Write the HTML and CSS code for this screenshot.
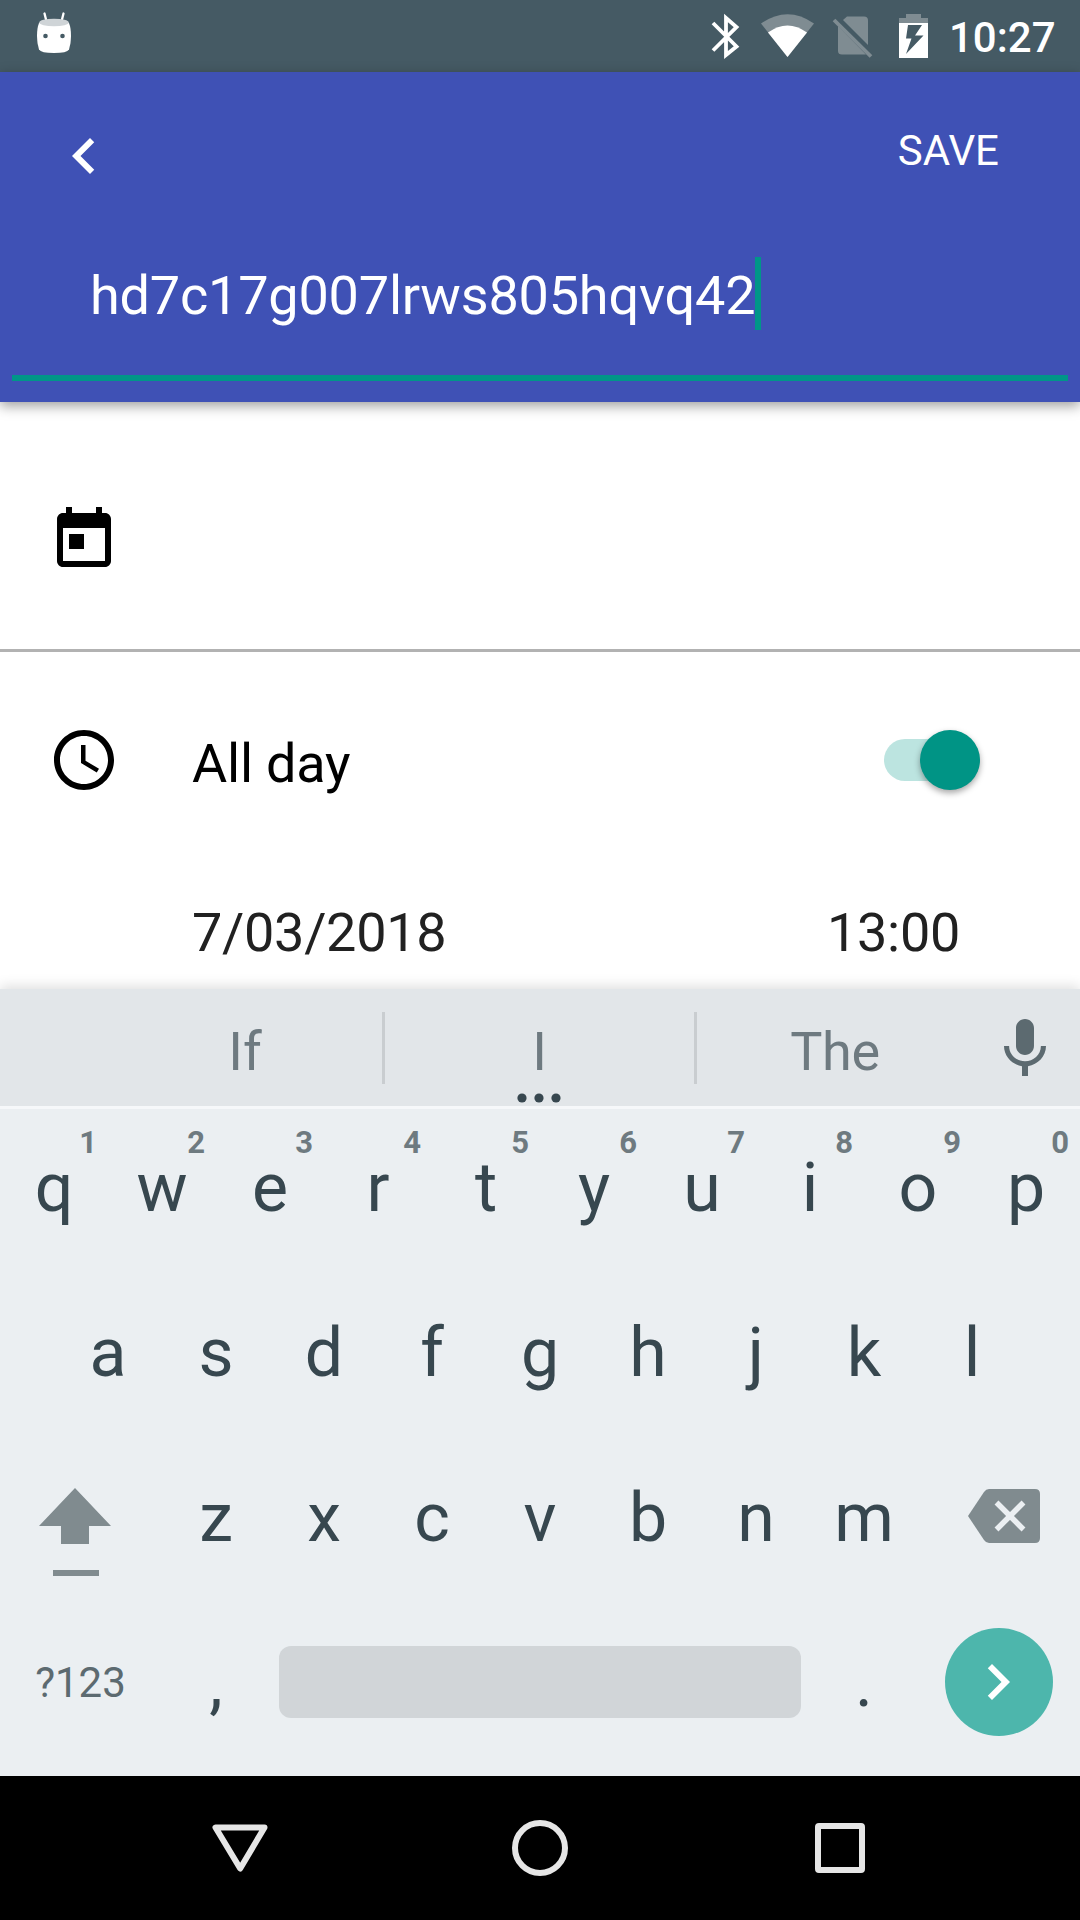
FILE: index.html
```html
<!DOCTYPE html>
<html lang="en">
<head>
<meta charset="utf-8">
<title>Edit event</title>
<link rel="stylesheet" href="styles.css">
</head>
<body>
<div class="screen">
  <div class="status">
    <svg class="status-left" width="360" height="72" viewBox="0 0 360 72">
      <path d="M44.500 13.500l2 8M63.500 13.500l-2 8" stroke="#fff" stroke-width="2.300" stroke-linecap="round"/>
      <path d="M39 23Q54 17 69 23Q71 28 71 36Q71 44 69 49.500Q67 53 54 53Q41 53 39 49.500Q37 44 37 36Q37 28 39 23Z" fill="#fff"/>
      <ellipse cx="54" cy="22.500" rx="14.800" ry="3.800" fill="#cfd4d7"/>
      <circle cx="45.500" cy="36" r="2.300" fill="#455a64"/><circle cx="62.500" cy="36" r="2.300" fill="#455a64"/>
    </svg>
    <svg class="status-icons" width="250" height="72" viewBox="700 0 250 72">
      <path d="M713 23L736.500 46.500L726 55V18L736.500 27L713 50.500" fill="none" stroke="#fff" stroke-width="3.800"/>
      <path d="M761 23.500Q787.500 5 814 23.500L787.500 57Z" fill="#7f8c92"/>
      <path d="M768 32.500Q787.500 18.500 807 32.500L787.500 57Z" fill="#fff"/>
      <path d="M843 20L847 16.500H864Q868 16.500 868 20.500V45Z" fill="#7f8c92"/>
      <path d="M838 26L866 54.500H842Q838 54.500 838 51Z" fill="#7f8c92"/>
      <path d="M834 20L871 56.500" stroke="#7f8c92" stroke-width="3.800"/>
      <path d="M899 23V18H906V14H921V18H928V23Z" fill="#7f8c92"/>
      <path d="M899 23H928V58H899Z" fill="#fff"/>
      <path d="M908 25H922L915 35.500H923.500L906 54L911.500 38.500H906Z" fill="#455a64"/>
    </svg>
    <span class="time">10:27</span>
  </div>

  <header class="header">
    <div class="toolbar">
      <svg width="72" height="72" viewBox="0 0 24 24"><path fill="#fff" d="M15.410 7.410 14 6l-6 6 6 6 1.410-1.410L10.830 12z"/></svg>
      <span class="save">SAVE</span>
    </div>
    <div class="title-field"><span class="title">hd7c17g007lrws805hqvq42</span><i class="caret"></i></div>
  </header>

  <main class="form">
    <div class="row calendar-row">
      <svg width="72" height="72" viewBox="0 0 24 24"><path d="M19 3h-1V1h-2v2H8V1H6v2H5c-1.110 0-1.990.9-1.990 2L3 19c0 1.100.890 2 2 2h14c1.100 0 2-.9 2-2V5c0-1.100-.9-2-2-2zm0 16H5V8h14v11zM7 10h5v5H7z"/></svg>
    </div>
    <div class="row allday-row">
      <svg width="72" height="72" viewBox="0 0 24 24"><path d="M11.990 2C6.470 2 2 6.480 2 12s4.470 10 9.990 10C17.520 22 22 17.520 22 12S17.520 2 11.990 2zM12 20c-4.420 0-8-3.580-8-8s3.580-8 8-8 8 3.580 8 8-3.580 8-8 8zm.5-13H11v6l5.250 3.150.750-1.230-4.500-2.670z"/></svg>
      <span class="label">All day</span>
      <span class="switch"><i class="thumb"></i></span>
    </div>
    <div class="date-row"><span>7/03/2018</span><span>13:00</span></div>
  </main>

  <section class="keyboard">
    <div class="suggestions">
      <span class="word first">If</span>
      <span class="word middle">I<svg class="dots" width="44" height="10" viewBox="0 0 44 10"><g fill="#37474f"><circle cx="5" cy="5" r="4.600"/><circle cx="22" cy="5" r="4.600"/><circle cx="39" cy="5" r="4.600"/></g></svg></span>
      <span class="word last">The</span>
      <svg class="mic" width="72" height="72" viewBox="0 0 24 24"><path fill="#5c6a70" d="M12 14c1.660 0 2.990-1.340 2.990-3L15 5c0-1.660-1.340-3-3-3S9 3.340 9 5v6c0 1.660 1.340 3 3 3zm5.300-3c0 3-2.540 5.100-5.300 5.100S6.700 14 6.700 11H5c0 3.410 2.720 6.230 6 6.720V21h2v-3.280c3.280-.480 6-3.300 6-6.720h-1.700z"/></svg>
    </div>
    <div class="keys">
      <span class="key">q<sup>1</sup></span><span class="key">w<sup>2</sup></span><span class="key">e<sup>3</sup></span><span class="key">r<sup>4</sup></span><span class="key">t<sup>5</sup></span><span class="key">y<sup>6</sup></span><span class="key">u<sup>7</sup></span><span class="key">i<sup>8</sup></span><span class="key">o<sup>9</sup></span><span class="key">p<sup>0</sup></span>
    </div>
    <div class="keys">
      <span class="key">a</span><span class="key">s</span><span class="key">d</span><span class="key">f</span><span class="key">g</span><span class="key">h</span><span class="key">j</span><span class="key">k</span><span class="key">l</span>
    </div>
    <div class="keys">
      <svg width="162" height="165" viewBox="0 0 162 165"><path fill="#808b8f" d="M75 49L111 87H89V105H61V87H39ZM53 131H99V137H53Z"/></svg>
      <span class="key">z</span><span class="key">x</span><span class="key">c</span><span class="key">v</span><span class="key">b</span><span class="key">n</span><span class="key">m</span>
      <svg width="162" height="165" viewBox="0 0 162 165"><path fill="#808b8f" d="M50 77L66 53Q68 50 71 50H117Q122 50 122 55V99Q122 104 117 104H71Q68 104 66 101Z"/><path d="M78.500 63.500L105.500 90.500M105.500 63.500L78.500 90.500" stroke="#ebeff2" stroke-width="5.500"/></svg>
    </div>
    <div class="keys">
      <span class="symbols">?123</span>
      <span class="key">,</span>
      <span class="space"></span>
      <span class="key">.</span>
      <span class="enter"><svg width="72" height="72" viewBox="0 0 24 24"><path fill="#fff" d="M10 6 8.590 7.410 13.170 12l-4.580 4.590L10 18l6-6z"/></svg></span>
    </div>
  </section>

  <nav class="nav">
    <svg width="72" height="72" viewBox="0 0 72 72"><path d="M11.500 15.500H60.500L36.200 56.500Z"/></svg>
    <svg width="72" height="72" viewBox="0 0 72 72"><circle cx="36" cy="36" r="25"/></svg>
    <svg width="72" height="72" viewBox="0 0 72 72"><rect x="14" y="14" width="44" height="44" rx="1"/></svg>
  </nav>
</div>
</body>
</html>
```
FILE: styles.css
```css
* { box-sizing: border-box; }
body { margin: 0; font-family: Roboto, sans-serif; background: #fff; }
svg { display: block; flex: none; }
.screen { width: 1080px; height: 1920px; display: flex; flex-direction: column; overflow: hidden; }

.status { height: 72px; flex: none; display: flex; background: #455a64; color: #fff; }
.status-icons { margin-left: 340px; }
.time { margin-left: -1px; font-size: 42px; font-weight: 500; line-height: 76px; }

.header { height: 330px; flex: none; background: #3f51b5; color: #fff; box-shadow: 0 4px 12px rgba(0, 0, 0, .38); z-index: 1; padding: 0 12px; }
.toolbar { height: 158px; display: flex; justify-content: space-between; padding: 48px 69px 0 36px; }
.save { font-size: 42px; line-height: 62px; }
.title-field { height: 151px; border-bottom: 6px solid #009688; padding: 27px 0 0 78px; display: flex; font-size: 54px; line-height: 78px; }
.title { letter-spacing: -.2px; }
.caret { width: 6px; height: 73px; background: #009688; }

.form { height: 587px; flex: none; background: #fff; }
.row { display: flex; padding-left: 48px; }
.calendar-row { height: 250px; padding-top: 102px; border-bottom: 3px solid #b2b2b2; }
.allday-row { height: 185px; padding-top: 72px; }
.label { margin-left: 72px; font-size: 54px; line-height: 80px; letter-spacing: -.2px; color: #000; }
.switch { width: 95.500px; height: 42px; margin: 15px 100.500px 0 auto; border-radius: 21px; background: #bce4e0; display: flex; justify-content: flex-end; align-items: center; }
.thumb { width: 60px; height: 60px; flex: none; border-radius: 50%; background: #009485; box-shadow: 0 3px 6px rgba(0, 0, 0, .35); }
.date-row { display: flex; justify-content: space-between; padding: 63px 120px 0 192px; font-size: 54px; line-height: 66px; letter-spacing: -.3px; color: #212121; }

.keyboard { height: 787px; flex: none; background: #ebeff2; box-shadow: 0 -3px 12px rgba(0, 0, 0, .13); color: #37474f; }
.suggestions { height: 120px; background: #e2e6e9; border-bottom: 3px solid #f6f8fa; display: flex; align-items: flex-start; color: #6e7a80; font-size: 54px; }
.word { height: 72px; margin-top: 23px; line-height: 80px; text-align: center; border-right: 3px solid #c9cdd0; }
.first { width: 277px; margin-left: 108px; }
.middle { width: 312px; position: relative; }
.dots { position: absolute; left: 132px; top: 81px; }
.last { width: 276px; border-right: 0; letter-spacing: -.3px; }
.mic { margin: 24px 0 0 16px; }

.keys { height: 165px; display: flex; justify-content: center; }
.key { width: 108px; position: relative; text-align: center; font-size: 68px; line-height: 158px; }
.key sup { position: absolute; right: 11px; top: 14px; font-size: 31px; font-weight: 700; line-height: 40px; color: #6e7a80; }
.symbols { width: 162px; text-align: center; font-size: 42px; line-height: 158px; text-indent: -1px; color: #5c6a70; }
.space { width: 522px; height: 72px; margin: 42px 9px 0; border-radius: 12px; background: #d1d5d8; }
.enter { width: 108px; height: 108px; margin: 24px 27px 0; padding-right: 2px; border-radius: 50%; background: #4db6ac; display: flex; align-items: center; justify-content: center; }

.nav { height: 144px; flex: none; background: #000; display: flex; justify-content: center; align-items: center; gap: 228px; }
.nav svg { fill: none; stroke: #e6e6e6; stroke-width: 6px; stroke-linejoin: round; }
```
